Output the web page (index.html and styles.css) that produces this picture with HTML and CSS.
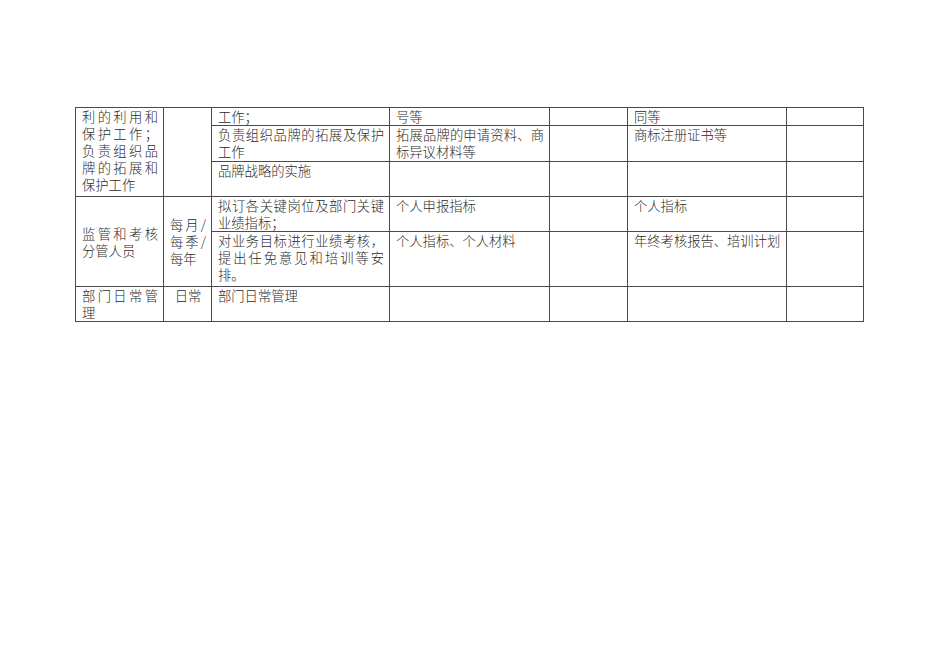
FILE: index.html
```html
<!DOCTYPE html>
<html lang="zh-CN">
<head>
<meta charset="utf-8">
<title>职责表</title>
<link rel="stylesheet" href="styles.css">
</head>
<body>
<div class="page">
  <table class="duty">
    <colgroup>
      <col class="c1"><col class="c2"><col class="c3"><col class="c4"><col class="c5"><col class="c6"><col class="c7">
    </colgroup>
    <tbody>
      <tr class="r1">
        <td rowspan="3" class="jt">利的利用和保护工作；负责组织品牌的拓展和保护工作</td>
        <td rowspan="3"></td>
        <td class="jt">工作；</td>
        <td>号等</td>
        <td></td>
        <td>同等</td>
        <td></td>
      </tr>
      <tr class="r2">
        <td class="jt">负责组织品牌的拓展及保护工作</td>
        <td class="jt">拓展品牌的申请资料、商标异议材料等</td>
        <td></td>
        <td>商标注册证书等</td>
        <td></td>
      </tr>
      <tr class="r3">
        <td>品牌战略的实施</td>
        <td></td>
        <td></td>
        <td></td>
        <td></td>
      </tr>
      <tr class="r4">
        <td rowspan="2" class="jt mid">监管和考核分管人员</td>
        <td rowspan="2" class="jt mid">每月/每季/每年</td>
        <td class="jt">拟订各关键岗位及部门关键业绩指标；</td>
        <td>个人申报指标</td>
        <td></td>
        <td>个人指标</td>
        <td></td>
      </tr>
      <tr class="r5">
        <td class="jt">对业务目标进行业绩考核，提出任免意见和培训等安排。</td>
        <td>个人指标、个人材料</td>
        <td></td>
        <td>年终考核报告、培训计划</td>
        <td></td>
      </tr>
      <tr class="r6">
        <td class="jt">部门日常管理</td>
        <td class="ctr">日常</td>
        <td>部门日常管理</td>
        <td></td>
        <td></td>
        <td></td>
        <td></td>
      </tr>
    </tbody>
  </table>
</div>
</body>
</html>
```
FILE: styles.css
```css
html, body {
  margin: 0;
  padding: 0;
  background: #ffffff;
}

.page {
  padding: 107px 0 0 75px;
}

.duty {
  border-collapse: collapse;
  table-layout: fixed;
  width: 789px;
  font-family: "Noto Sans CJK SC", "Liberation Serif", serif;
  font-size: 13.3px;
  font-weight: 300;
  line-height: 17px;
  color: #2a2a2a;
}

.duty td {
  border: 1px solid #4a4a4a;
  padding: 0 5px 0 6px;
  vertical-align: top;
  text-align: left;
  overflow: hidden;
}

.duty .jt {
  text-align: justify;
}

.duty .mid {
  vertical-align: middle;
}

.duty .ctr {
  text-align: center;
}

.c1 { width: 88px; }
.c2 { width: 48px; }
.c3 { width: 178px; }
.c4 { width: 160px; }
.c5 { width: 78px; }
.c6 { width: 159px; }
.c7 { width: 77px; }

.r1 { height: 17px; }
.r2 { height: 36px; }
.r3 { height: 35px; }
.r4 { height: 34px; }
.r5 { height: 55px; }
.r6 { height: 35px; }
```
